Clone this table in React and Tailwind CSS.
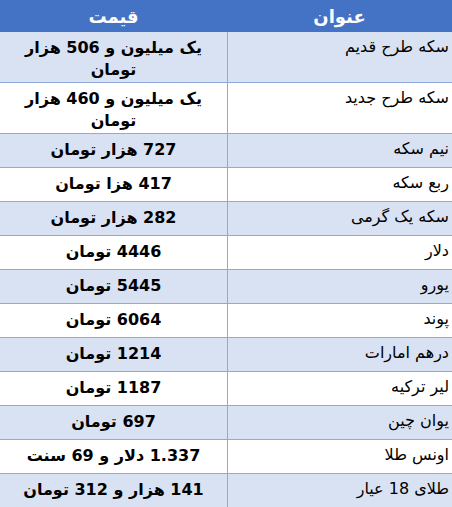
import React from 'react';

const rows = [
  { title: 'سکه طرح قدیم', price: ['یک میلیون و 506 هزار', 'تومان'] },
  { title: 'سکه طرح جدید', price: ['یک میلیون و 460 هزار', 'تومان'] },
  { title: 'نیم سکه', price: ['727 هزار تومان'] },
  { title: 'ربع سکه', price: ['417 هزا تومان'] },
  { title: 'سکه یک گرمی', price: ['282 هزار تومان'] },
  { title: 'دلار', price: ['4446 تومان'] },
  { title: 'یورو', price: ['5445 تومان'] },
  { title: 'پوند', price: ['6064 تومان'] },
  { title: 'درهم امارات', price: ['1214 تومان'] },
  { title: 'لیر ترکیه', price: ['1187 تومان'] },
  { title: 'یوان چین', price: ['697 تومان'] },
  { title: 'اونس طلا', price: ['1.337 دلار و 69 سنت'] },
  { title: 'طلای 18 عیار', price: ['141 هزار و 312 تومان'] },
];

const App = () => {
  return (
    <div dir="rtl" className="w-[452px] h-[507px] bg-white overflow-hidden" style={{ fontFamily: '"DejaVu Sans", Tahoma, sans-serif' }}>
      {/* سرستون */}
      <div className="flex h-[32px] bg-[#4472c4] text-white font-bold text-[18px]">
        <div className="w-[225px] flex items-center justify-center">عنوان</div>
        <div className="flex-1 flex items-center justify-center">قیمت</div>
      </div>

      {rows.map((row, i) => (
        <div
          key={i}
          className={`flex border-b border-[#8eaadb] ${row.price.length > 1 ? 'h-[51px]' : 'h-[34px]'} ${i % 2 === 0 ? 'bg-[#d9e2f3]' : 'bg-white'}`}
        >
          <div className="w-[225px] border-l border-[#8eaadb] pr-[3px] pt-[4px] text-[16px] leading-[22px] text-black">
            {row.title}
          </div>
          <div className="flex-1 px-[4px] pt-[5px] text-center font-bold text-[16px] leading-[22px] text-black">
            {row.price.map((line, j) => (
              <div key={j}>{line}</div>
            ))}
          </div>
        </div>
      ))}
    </div>
  );
};

export default App;
